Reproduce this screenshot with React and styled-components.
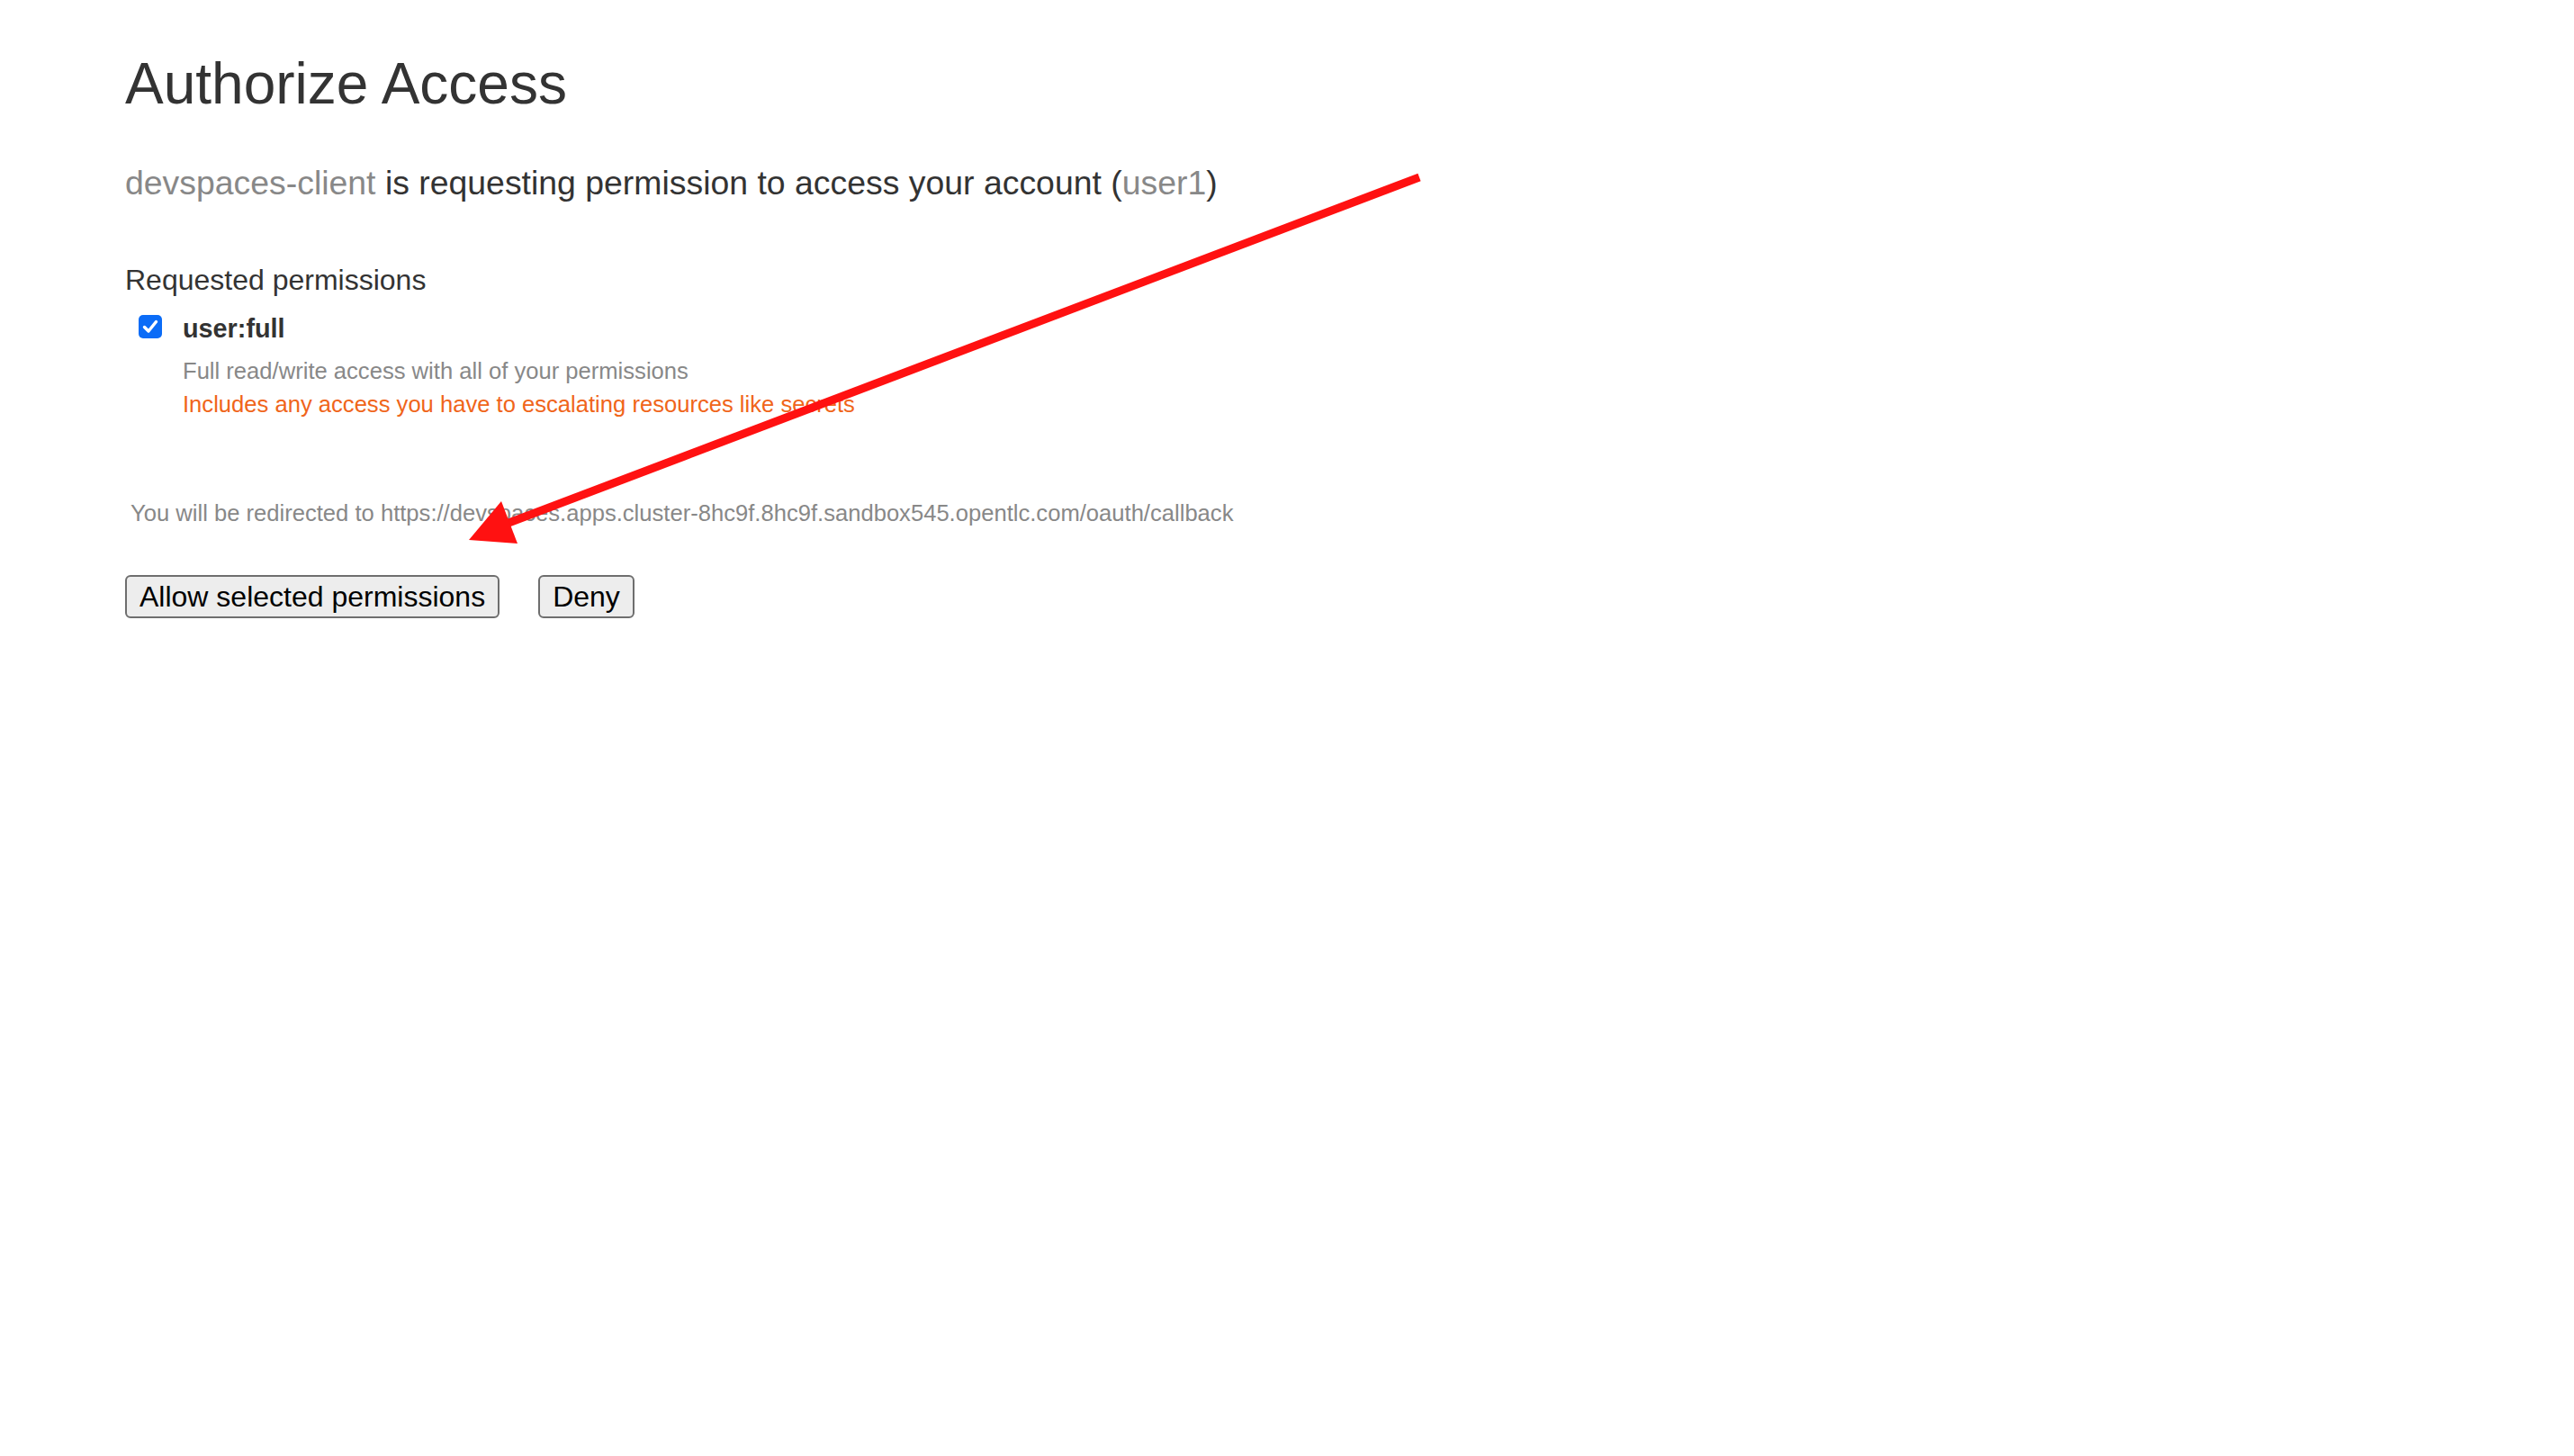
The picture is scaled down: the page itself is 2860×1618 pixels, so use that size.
import React from 'react';
import styled, { createGlobalStyle } from 'styled-components';

const GlobalStyle = createGlobalStyle`
  html, body {
    margin: 0;
    padding: 0;
    background: #fff;
  }
  body {
    font-family: "Liberation Sans", Arial, Helvetica, sans-serif;
    color: #333;
  }
`;

function CheckIcon() {
  return (
    <svg width="26" height="26" viewBox="0 0 26 26">
      <path d="M6.5 13.5 L11 18 L19.5 7.5" fill="none" stroke="#fff" strokeWidth="3.4" strokeLinecap="round" strokeLinejoin="round" />
    </svg>
  );
}

function Arrow() {
  return (
    <ArrowLayer viewBox="0 0 2860 1618" width="2860" height="1618">
      <line x1="1577" y1="197" x2="560" y2="583" stroke="#ff1111" strokeWidth="9" />
      <polygon points="521,600 557,557 575,604" fill="#ff1111" />
    </ArrowLayer>
  );
}

export default function App() {
  return (
    <>
      <GlobalStyle />
      <Page>
        <Title>Authorize Access</Title>
        <Lead>
          <Muted>devspaces-client</Muted> is requesting permission to access your account (<Muted>user1</Muted>)
        </Lead>

        <SectionTitle>Requested permissions</SectionTitle>
        <ScopeRow>
          <CheckBox>
            <CheckIcon />
          </CheckBox>
          <ScopeName>user:full</ScopeName>
        </ScopeRow>
        <ScopeInfo>
          <Description>Full read/write access with all of your permissions</Description>
          <Warning>Includes any access you have to escalating resources like secrets</Warning>
        </ScopeInfo>

        <Redirect>
          You will be redirected to https://devspaces.apps.cluster-8hc9f.8hc9f.sandbox545.opentlc.com/oauth/callback
        </Redirect>

        <Actions>
          <Button type="button">Allow selected permissions</Button>
          <Button type="button">Deny</Button>
        </Actions>
      </Page>
      <Arrow />
    </>
  );
}

const Page = styled.div`
  padding: 55px 0 0 139px;
  min-height: 1618px;
  box-sizing: border-box;
`;

const Title = styled.h1`
  margin: 0;
  font-size: 64px;
  line-height: 76px;
  font-weight: 400;
  color: #333;
`;

const Lead = styled.p`
  margin: 50px 0 0;
  font-size: 37.4px;
  line-height: 44px;
  color: #333;
`;

const Muted = styled.span`
  color: #888;
`;

const SectionTitle = styled.h3`
  margin: 67px 0 0;
  font-size: 32px;
  line-height: 38px;
  font-weight: 400;
  color: #333;
`;

const ScopeRow = styled.div`
  display: flex;
  align-items: flex-start;
  gap: 23px;
  margin: 18px 0 0 15px;
`;

const CheckBox = styled.span`
  display: flex;
  align-items: center;
  justify-content: center;
  width: 26px;
  height: 26px;
  margin-top: 2px;
  border-radius: 5px;
  background: #0b6cf7;
`;

const ScopeName = styled.span`
  font-size: 28.8px;
  line-height: 34px;
  font-weight: 700;
  color: #333;
`;

const ScopeInfo = styled.div`
  margin: 12px 0 0 64px;
  font-size: 25.6px;
  line-height: 37px;
`;

const Description = styled.div`
  color: #888;
`;

const Warning = styled.div`
  color: #f0651a;
`;

const Redirect = styled.p`
  margin: 84px 0 0 6px;
  font-size: 25.6px;
  line-height: 37px;
  color: #888;
`;

const Actions = styled.div`
  display: flex;
  gap: 43px;
  margin-top: 50px;
`;

const Button = styled.button`
  height: 48px;
  padding: 0 14px;
  font-family: "Liberation Sans", Arial, Helvetica, sans-serif;
  font-size: 32px;
  line-height: 36px;
  color: #000;
  background: #ededed;
  border: 2px solid #6e6e6e;
  border-radius: 6px;
  cursor: pointer;
`;

const ArrowLayer = styled.svg`
  position: absolute;
  top: 0;
  left: 0;
  pointer-events: none;
`;
